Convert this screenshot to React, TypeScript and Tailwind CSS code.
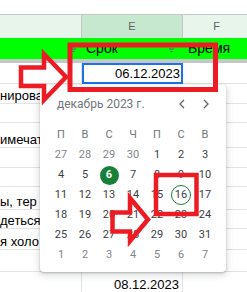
const rows = [
  { h: 'h-[21px]', d: '', e: '', input: true },
  { h: 'h-[20px]', d: 'нирова' },
  { h: 'h-[19px]', d: '' },
  { h: 'h-[25px]', d: 'имечат' },
  { h: 'h-[20px]', d: '' },
  { h: 'h-[19px]', d: '' },
  { h: 'h-[23px]', d: 'ы, тер' },
  { h: 'h-[19px]', d: 'деться' },
  { h: 'h-[21px]', d: 'я холо' },
  { h: 'h-[22px]', d: '' },
  { h: 'h-[21px]', d: '', e: '08.12.2023' },
]

const weekdays = ['П', 'В', 'С', 'Ч', 'П', 'С', 'В']

const weeks = [
  [27, 28, 29, 30, 1, 2, 3],
  [4, 5, 6, 7, 8, 9, 10],
  [11, 12, 13, 14, 15, 16, 17],
  [18, 19, 20, 21, 22, 23, 24],
  [25, 26, 27, 28, 29, 30, 31],
  [1, 2, 3, 4, 5, 6, 7],
]

function FilterIcon() {
  return (
    <svg width="9" height="6" viewBox="0 0 9 6" className="shrink-0">
      <rect x="0" y="0" width="9" height="1" fill="#5f6368" />
      <rect x="2" y="2.5" width="5" height="1" fill="#5f6368" />
      <rect x="3.5" y="5" width="2" height="1" fill="#5f6368" />
    </svg>
  )
}

function DatePicker() {
  return (
    <div className="absolute top-[85px] left-[40px] h-[187px] w-[186px] rounded-[4px] bg-white pt-[11px] font-['Roboto',sans-serif] shadow-[0_2px_6px_2px_rgba(60,64,67,0.15),0_1px_2px_rgba(60,64,67,0.3)]">
      <div className="flex h-4 items-center pr-[16px] pl-[17px]">
        <span className="flex-1 text-[12px] text-[#70757a]">декабрь 2023 г.</span>
        <div className="flex items-center gap-[16px]">
          <svg width="8" height="10" viewBox="0 0 8 10">
            <path d="M6 1 L2 5 L6 9" fill="none" stroke="#5f6368" strokeWidth="1.3" />
          </svg>
          <svg width="8" height="10" viewBox="0 0 8 10">
            <path d="M2 1 L6 5 L2 9" fill="none" stroke="#5f6368" strokeWidth="1.3" />
          </svg>
        </div>
      </div>
      <div className="mt-[13px] px-[9px]">
        <div className="grid h-5 grid-cols-7 items-center text-center text-[11px] text-[#70757a]">
          {weekdays.map((w, i) => (
            <span key={i}>{w}</span>
          ))}
        </div>
        {weeks.map((week, wi) => (
          <div key={wi} className="grid h-5 grid-cols-7 items-center text-center text-[11px]">
            {week.map((day, di) => {
              const outside = (wi === 0 && day > 20) || wi === 5
              if (wi === 1 && day === 6) {
                return (
                  <span key={di} className="flex justify-center">
                    <span className="flex h-[19px] w-[19px] items-center justify-center rounded-full bg-[#188038] font-bold text-white">
                      6
                    </span>
                  </span>
                )
              }
              if (wi === 2 && day === 16) {
                return (
                  <span key={di} className="flex justify-center">
                    <span className="flex h-[20px] w-[20px] items-center justify-center rounded-full border border-[#188038] text-[#3c4043]">
                      16
                    </span>
                  </span>
                )
              }
              return (
                <span key={di} className={outside ? 'text-[#80868b]' : 'text-[#3c4043]'}>
                  {day}
                </span>
              )
            })}
          </div>
        ))}
      </div>
    </div>
  )
}

function Annotations() {
  return (
    <svg width="247" height="292" className="pointer-events-none absolute top-0 left-0">
      <g fill="none" stroke="#ed1c24" strokeLinejoin="miter">
        <rect x="70" y="45" width="145.5" height="44.5" strokeWidth="5" />
        <rect x="156" y="175" width="40.5" height="39" strokeWidth="4.5" />
        <polygon
          points="21,67.5 44,67.5 44,54 66,77 44,100 44,86 21,86"
          strokeWidth="4.5"
        />
        <polygon
          points="112.5,212.5 130,212.5 130,198 148,219.5 130,241 130,231.5 112.5,231.5"
          strokeWidth="4.5"
        />
      </g>
    </svg>
  )
}

export default function App() {
  return (
    <div className="relative h-[292px] w-[247px] overflow-hidden bg-white font-['Liberation_Sans',Arial,sans-serif]">
      <div className="h-[14px]" />

      <div className="flex h-[24px] border-t border-[#c4c7c5] text-[11px] text-[#5f6368]">
        <div className="w-[82px] border-r border-[#c4c7c5] bg-[#e8f5ea]" />
        <div className="flex w-[101px] items-center justify-center border-r border-[#c4c7c5] bg-[#c5e8cf]">
          E
        </div>
        <div className="flex flex-1 items-center justify-center bg-[#e8f5ea] pl-[3px]">F</div>
      </div>

      <div className="flex h-[21px] items-center bg-[#00ff00] text-[14px] text-black">
        <div className="flex w-[82px] justify-end pr-[4px]">
          <FilterIcon />
        </div>
        <div className="flex w-[101px] items-center justify-between pr-[7px] pl-[4px]">
          <span>Срок</span>
          <FilterIcon />
        </div>
        <div className="pl-[5px]">Время</div>
      </div>

      <div className="h-[4px] bg-[#c4c7c5]" />

      {rows.map((r, i) => (
        <div
          key={i}
          className={`flex ${r.h} border-b border-[#e2e3e3] text-[13px] leading-[14px] text-black`}
        >
          <div className="flex w-[82px] items-end border-r border-[#e2e3e3] whitespace-nowrap">
            {r.d}
          </div>
          {r.input ? (
            <div className="-mb-[1px] flex w-[101px] items-center justify-end border-2 border-[#1a73e8] pr-[1px]">
              06.12.2023
            </div>
          ) : (
            <div className="flex w-[101px] items-end justify-end border-r border-[#e2e3e3] pr-[3px]">
              {r.e}
            </div>
          )}
          <div className="flex-1" />
        </div>
      ))}

      <DatePicker />
      <Annotations />
    </div>
  )
}
